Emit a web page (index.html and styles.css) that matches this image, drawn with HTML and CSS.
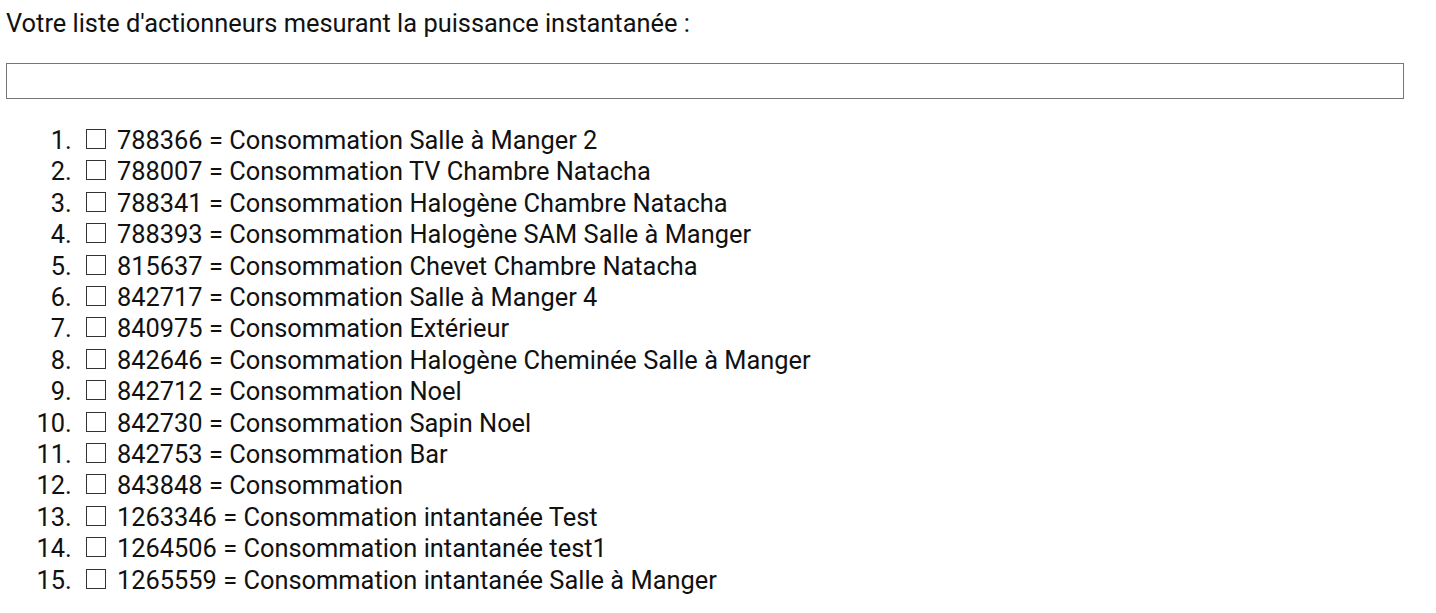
FILE: index.html
```html
<!DOCTYPE html>
<html lang="fr">
<head>
    <meta charset="UTF-8" />
    <title>Actionneurs</title>
    <link rel="stylesheet" href="styles.css">
</head>
<body>
    <div class="container">
        <p class="intro">Votre liste d'actionneurs mesurant la puissance instantanée :</p>
        <input type="text" class="search">
        <ol class="actors">
            <li><span class="box"></span>788366 = Consommation Salle à Manger 2</li>
            <li><span class="box"></span>788007 = Consommation TV Chambre Natacha</li>
            <li><span class="box"></span>788341 = Consommation Halogène Chambre Natacha</li>
            <li><span class="box"></span>788393 = Consommation Halogène SAM Salle à Manger</li>
            <li><span class="box"></span>815637 = Consommation Chevet Chambre Natacha</li>
            <li><span class="box"></span>842717 = Consommation Salle à Manger 4</li>
            <li><span class="box"></span>840975 = Consommation Extérieur</li>
            <li><span class="box"></span>842646 = Consommation Halogène Cheminée Salle à Manger</li>
            <li><span class="box"></span>842712 = Consommation Noel</li>
            <li><span class="box"></span>842730 = Consommation Sapin Noel</li>
            <li><span class="box"></span>842753 = Consommation Bar</li>
            <li><span class="box"></span>843848 = Consommation</li>
            <li><span class="box"></span>1263346 = Consommation intantanée Test</li>
            <li><span class="box"></span>1264506 = Consommation intantanée test1</li>
            <li><span class="box"></span>1265559 = Consommation intantanée Salle à Manger</li>
        </ol>
    </div>
</body>
</html>
```

FILE: styles.css
```css
*,
*:before,
*:after{
    padding: 0;
    margin: 0;
    box-sizing: border-box;
}
body{
    background-color: #ffffff;
    color: #111111;
    font-family: Roboto, "Noto Sans", sans-serif;
    font-size: 25.4px;
}
.container{
    padding: 8px 6px;
}
.intro{
    line-height: 30px;
}
.search{
    display: block;
    width: 1398px;
    height: 36px;
    margin-top: 25px;
    border: 1px solid #767676;
    background-color: #ffffff;
    outline: none;
}
.actors{
    margin-top: 26px;
    padding-left: 72px;
    line-height: 31.4px;
}
.box{
    display: inline-block;
    width: 20px;
    height: 20px;
    border: 1px solid #333333;
    margin: 0 11px 0 8px;
    vertical-align: 0;
}
```
